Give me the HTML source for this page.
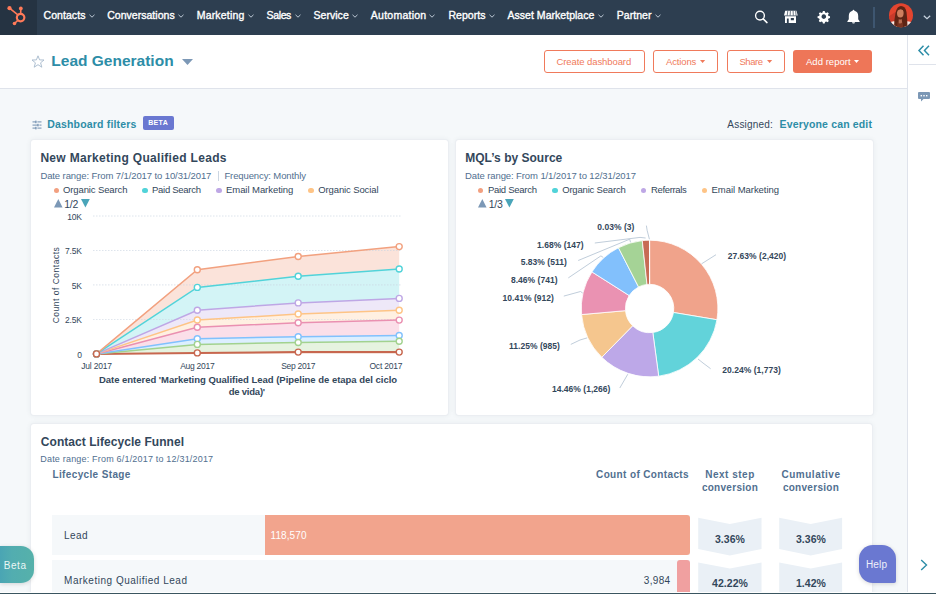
<!DOCTYPE html><html><head><meta charset="utf-8"><style>
html,body{margin:0;padding:0;}
body{width:936px;height:594px;overflow:hidden;position:relative;background:#f5f8fa;font-family:"Liberation Sans", sans-serif;}
.t{position:absolute;white-space:nowrap;line-height:20px;}
svg{position:absolute;overflow:visible;}
</style></head><body>
<div style="position:absolute;left:0px;top:0px;width:936px;height:34.5px;background:#2d3e50"></div>
<div style="position:absolute;left:0px;top:0px;width:37px;height:34.5px;background:#253342"></div>
<svg style="left:0;top:0" width="37" height="35" viewBox="0 0 37 35">
<g fill="none" stroke="#ff7a59" stroke-linecap="round">
<circle cx="20.6" cy="17.6" r="3.75" stroke-width="2.2"/>
<line x1="9.5" y1="8.2" x2="17.6" y2="14.6" stroke-width="1.6"/>
<line x1="20.8" y1="8.4" x2="20.7" y2="13" stroke-width="1.6"/>
<line x1="14.5" y1="23.5" x2="17.8" y2="20.4" stroke-width="1.6"/>
</g>
<g fill="#ff7a59"><circle cx="9.5" cy="8.2" r="2.1"/><circle cx="20.8" cy="8.4" r="1.9"/><circle cx="14.5" cy="23.5" r="1.8"/></g>
</svg>
<div class="t" style="left:43.6px;top:5.30px;font-size:10.5px;font-weight:400;color:#ffffff;letter-spacing:0.05px;-webkit-text-stroke:0.35px #ffffff">Contacts</div>
<svg style="left:88.6px;top:14px" width="6" height="4" viewBox="0 0 6 4"><polyline points="0.5,0.8 3,3.2 5.5,0.8" fill="none" stroke="#cbd6e2" stroke-width="0.9"/></svg>
<div class="t" style="left:107.2px;top:5.30px;font-size:10.5px;font-weight:400;color:#ffffff;letter-spacing:0.03px;-webkit-text-stroke:0.35px #ffffff">Conversations</div>
<svg style="left:177.9px;top:14px" width="6" height="4" viewBox="0 0 6 4"><polyline points="0.5,0.8 3,3.2 5.5,0.8" fill="none" stroke="#cbd6e2" stroke-width="0.9"/></svg>
<div class="t" style="left:196.7px;top:5.30px;font-size:10.5px;font-weight:400;color:#ffffff;letter-spacing:0.2px;-webkit-text-stroke:0.35px #ffffff">Marketing</div>
<svg style="left:248.2px;top:14px" width="6" height="4" viewBox="0 0 6 4"><polyline points="0.5,0.8 3,3.2 5.5,0.8" fill="none" stroke="#cbd6e2" stroke-width="0.9"/></svg>
<div class="t" style="left:266.5px;top:5.30px;font-size:10.5px;font-weight:400;color:#ffffff;letter-spacing:-0.35px;-webkit-text-stroke:0.35px #ffffff">Sales</div>
<svg style="left:295.1px;top:14px" width="6" height="4" viewBox="0 0 6 4"><polyline points="0.5,0.8 3,3.2 5.5,0.8" fill="none" stroke="#cbd6e2" stroke-width="0.9"/></svg>
<div class="t" style="left:313.5px;top:5.30px;font-size:10.5px;font-weight:400;color:#ffffff;letter-spacing:0.04px;-webkit-text-stroke:0.35px #ffffff">Service</div>
<svg style="left:352.25px;top:14px" width="6" height="4" viewBox="0 0 6 4"><polyline points="0.5,0.8 3,3.2 5.5,0.8" fill="none" stroke="#cbd6e2" stroke-width="0.9"/></svg>
<div class="t" style="left:370.8px;top:5.30px;font-size:10.5px;font-weight:400;color:#ffffff;letter-spacing:0.25px;-webkit-text-stroke:0.35px #ffffff">Automation</div>
<svg style="left:429.4px;top:14px" width="6" height="4" viewBox="0 0 6 4"><polyline points="0.5,0.8 3,3.2 5.5,0.8" fill="none" stroke="#cbd6e2" stroke-width="0.9"/></svg>
<div class="t" style="left:448.5px;top:5.30px;font-size:10.5px;font-weight:400;color:#ffffff;letter-spacing:0.03px;-webkit-text-stroke:0.35px #ffffff">Reports</div>
<svg style="left:489px;top:14px" width="6" height="4" viewBox="0 0 6 4"><polyline points="0.5,0.8 3,3.2 5.5,0.8" fill="none" stroke="#cbd6e2" stroke-width="0.9"/></svg>
<div class="t" style="left:507.5px;top:5.30px;font-size:10.5px;font-weight:400;color:#ffffff;letter-spacing:0.03px;-webkit-text-stroke:0.35px #ffffff">Asset Marketplace</div>
<svg style="left:597.75px;top:14px" width="6" height="4" viewBox="0 0 6 4"><polyline points="0.5,0.8 3,3.2 5.5,0.8" fill="none" stroke="#cbd6e2" stroke-width="0.9"/></svg>
<div class="t" style="left:616.75px;top:5.30px;font-size:10.5px;font-weight:400;color:#ffffff;letter-spacing:0.05px;-webkit-text-stroke:0.35px #ffffff">Partner</div>
<svg style="left:655.4px;top:14px" width="6" height="4" viewBox="0 0 6 4"><polyline points="0.5,0.8 3,3.2 5.5,0.8" fill="none" stroke="#cbd6e2" stroke-width="0.9"/></svg>
<svg style="left:0;top:0" width="936" height="34" viewBox="0 0 936 34">
<g fill="none" stroke="#ffffff" stroke-width="1.35">
<circle cx="760" cy="15.6" r="4.4"/><line x1="763.2" y1="18.9" x2="767" y2="22.6" stroke-linecap="round" stroke-width="1.5"/>
</g>
<g fill="#ffffff">
<path d="M785.2 10.8 h11.3 l1.2 4.8 h-13.7 z"/>
<path d="M785 16.3 h11 v6.8 h-11 z M786.9 18.4 v4.7 h1.8 v-4.7 z M790.8 18 v2.2 h3.1 v-2.2 z" fill-rule="evenodd"/>
</g>
<g stroke="#2d3e50" stroke-width="0.7">
<line x1="787.8" y1="10.8" x2="787.2" y2="15.6"/><line x1="790.4" y1="10.8" x2="790.1" y2="15.6"/>
<line x1="793.1" y1="10.8" x2="793.3" y2="15.6"/><line x1="795.6" y1="10.8" x2="796.1" y2="15.6"/>
</g>
<g fill="#ffffff" transform="translate(823.8,16.6)">
<path d="M-0.9 -5.6 h1.8 l0.35 1.55 l1.15 0.5 l1.35 -0.85 l1.27 1.27 l-0.85 1.35 l0.5 1.15 l1.55 0.35 v1.8 l-1.55 0.35 l-0.5 1.15 l0.85 1.35 l-1.27 1.27 l-1.35 -0.85 l-1.15 0.5 l-0.35 1.55 h-1.8 l-0.35 -1.55 l-1.15 -0.5 l-1.35 0.85 l-1.27 -1.27 l0.85 -1.35 l-0.5 -1.15 l-1.55 -0.35 v-1.8 l1.55 -0.35 l0.5 -1.15 l-0.85 -1.35 l1.27 -1.27 l1.35 0.85 l1.15 -0.5 z M0 -2.3 a2.3 2.3 0 1 0 0.01 0 z" fill-rule="evenodd"/>
</g>
<g fill="#ffffff">
<path d="M853.5 9.8 q0.9 0 0.9 0.9 q3.8 1 3.8 5.2 v3.4 l1.4 1.9 v0.8 h-12.2 v-0.8 l1.4 -1.9 v-3.4 q0 -4.2 3.8 -5.2 q0 -0.9 0.9 -0.9 z"/>
<path d="M852 22.2 h3 q0 1.4 -1.5 1.4 q-1.5 0 -1.5 -1.4 z"/>
</g>
<line x1="874" y1="7" x2="874" y2="28" stroke="#516f90" stroke-width="1"/>
</svg>
<svg style="left:888px;top:2.5px" width="26" height="26" viewBox="0 0 26 26">
<defs><clipPath id="av"><circle cx="13" cy="12.3" r="12"/></clipPath></defs>
<g clip-path="url(#av)">
<rect x="0" y="0" width="26" height="26" fill="#e3452f"/>
<path d="M0 14 L9 8 L9 26 L0 26 z" fill="#c93a2a"/>
<path d="M1 20 q4 -3 8 -1 l1 8 h-9 z" fill="#f4ede8"/>
<path d="M16 19 q4 -2 9 1 v6 h-9 z" fill="#f0e8e4"/>
<path d="M6 27 q0 -10 1.5 -17 q1.5 -7 5.5 -7 q4.5 0 5.5 6 q1 7 1 18 z" fill="#5e2414"/>
<ellipse cx="12.3" cy="10" rx="3.3" ry="4.5" fill="#cf7f5e"/>
<path d="M10.8 16 q1.5 1 3 0 l0.8 11 h-4.6 z" fill="#b86d52"/>
<path d="M9.5 19 q2.5 3 5 0 l0.5 8 h-6 z" fill="#7a3320"/>
<path d="M9 9 q0.5 -5 3.6 -5 q3.3 0 3.9 5 q-1.2 -2.8 -3.9 -2.8 q-2.6 0 -3.6 2.8 z" fill="#5e2414"/>
</g></svg>
<svg style="left:923px;top:15px" width="8" height="5" viewBox="0 0 8 5"><polyline points="0.8,0.8 4,3.8 7.2,0.8" fill="none" stroke="#cbd6e2" stroke-width="1.2"/></svg>
<div style="position:absolute;left:0px;top:34.5px;width:907.5px;height:53.5px;background:#ffffff;border-bottom:1px solid #dfe3eb"></div>
<svg style="left:31px;top:55px" width="14" height="13" viewBox="0 0 14 13"><polygon points="7,0.8 8.6,4.9 13,5.0 9.6,7.8 10.8,12.2 7,9.7 3.2,12.2 4.4,7.8 1,5.0 5.4,4.9" fill="none" stroke="#a6b9cc" stroke-width="0.9" stroke-linejoin="round"/></svg>
<div class="t" style="left:51.3px;top:51.00px;font-size:15.5px;font-weight:700;color:#2d8da7;letter-spacing:0px;">Lead Generation</div>
<svg style="left:182px;top:59px" width="11" height="6" viewBox="0 0 11 6"><polygon points="0,0 11,0 5.5,6" fill="#7c98b6"/></svg>
<div style="position:absolute;left:543.7px;top:49.8px;width:100.89999999999998px;height:23.7px;border:1px solid #f07a5b;background:#fff;border-radius:3px;box-sizing:border-box"></div>
<div class="t" style="left:556.5px;top:51.60px;font-size:9.5px;font-weight:400;color:#f07a5b;letter-spacing:-0.09px;">Create dashboard</div>
<div style="position:absolute;left:653.2px;top:49.8px;width:64.59999999999991px;height:23.7px;border:1px solid #f07a5b;background:#fff;border-radius:3px;box-sizing:border-box"></div>
<div class="t" style="left:666px;top:51.60px;font-size:9.5px;font-weight:400;color:#f07a5b;letter-spacing:-0.14px;">Actions</div>
<svg style="left:699.6px;top:60px" width="5.2" height="3" viewBox="0 0 5.2 3"><polygon points="0,0 5.2,0 2.6,3" fill="#f07a5b"/></svg>
<div style="position:absolute;left:726.5px;top:49.8px;width:58.200000000000045px;height:23.7px;border:1px solid #f07a5b;background:#fff;border-radius:3px;box-sizing:border-box"></div>
<div class="t" style="left:739.4px;top:51.60px;font-size:9.5px;font-weight:400;color:#f07a5b;letter-spacing:-0.44px;">Share</div>
<svg style="left:766.5px;top:60px" width="5.2" height="3" viewBox="0 0 5.2 3"><polygon points="0,0 5.2,0 2.6,3" fill="#f07a5b"/></svg>
<div style="position:absolute;left:793.2px;top:49.8px;width:79.0px;height:23.7px;background:#ee7658;border-radius:3px;box-sizing:border-box"></div>
<div class="t" style="left:806px;top:51.60px;font-size:9.5px;font-weight:400;color:#ffffff;letter-spacing:0.03px;">Add report</div>
<svg style="left:854.2px;top:60px" width="5" height="3" viewBox="0 0 5 3"><polygon points="0,0 5,0 2.5,3" fill="#ffffff"/></svg>
<div style="position:absolute;left:907.3px;top:34.5px;width:28.7px;height:560px;background:#ffffff;border-left:1.5px solid #dfe3eb;box-sizing:border-box"></div>
<div style="position:absolute;left:909px;top:64px;width:27px;height:1px;background:#dfe3eb"></div>
<svg style="left:918px;top:45px" width="12" height="11" viewBox="0 0 12 11"><g fill="none" stroke="#2d8da7" stroke-width="1.5"><polyline points="5.5,0.8 1,5.5 5.5,10.2"/><polyline points="11,0.8 6.5,5.5 11,10.2"/></g></svg>
<svg style="left:918px;top:92px" width="12" height="10" viewBox="0 0 12 10"><path d="M1 0 h10 q1 0 1 1 v5 q0 1 -1 1 h-5.5 l-2.5 2.6 v-2.6 h-2 q-1 0 -1 -1 v-5 q0 -1 1 -1 z" fill="#7c98b6"/><g fill="#fff"><rect x="2.6" y="3" width="1.4" height="1.4"/><rect x="5.3" y="3" width="1.4" height="1.4"/><rect x="8" y="3" width="1.4" height="1.4"/></g></svg>
<svg style="left:920px;top:559px" width="8" height="12" viewBox="0 0 8 12"><polyline points="1.2,1 6.5,6 1.2,11" fill="none" stroke="#2d8da7" stroke-width="1.4"/></svg>
<svg style="left:31.5px;top:119.5px" width="10" height="10" viewBox="0 0 10 10"><g stroke="#7c98b6" stroke-width="1.1"><line x1="0.5" y1="1.9" x2="4.4" y2="1.9"/><line x1="5.4" y1="1.9" x2="9.5" y2="1.9"/><line x1="0.5" y1="5.1" x2="6.5" y2="5.1"/><line x1="7.4" y1="5.1" x2="9.5" y2="5.1"/><line x1="0.5" y1="8.1" x2="4.4" y2="8.1"/><line x1="5.4" y1="8.1" x2="9.5" y2="8.1"/></g><g fill="#7c98b6"><rect x="3.2" y="0.6" width="1.3" height="2.6"/><rect x="5.3" y="3.8" width="1.3" height="2.6"/><rect x="3.2" y="6.8" width="1.3" height="2.6"/></g></svg>
<div class="t" style="left:47.2px;top:114.30px;font-size:10.5px;font-weight:700;color:#2d8da7;letter-spacing:0.18px;">Dashboard filters</div>
<div style="position:absolute;left:142.6px;top:115.6px;width:31.1px;height:14.4px;background:#6a78d1;border-radius:2px"></div>
<div class="t" style="left:8.150000000000006px;width:300px;text-align:center;top:113.00px;font-size:7px;font-weight:700;color:#ffffff;letter-spacing:0.3px;">BETA</div>
<div class="t" style="left:727.3px;top:114.50px;font-size:10px;font-weight:400;color:#33475b;letter-spacing:0.21px;">Assigned:</div>
<div class="t" style="left:779.5px;top:114.30px;font-size:10.5px;font-weight:700;color:#2d8da7;letter-spacing:0.16px;">Everyone can edit</div>
<div style="position:absolute;left:31px;top:140px;width:417px;height:275.3px;background:#ffffff;border-radius:3px;box-shadow:0 0 0 1px #ebeef2, 0 0 5px 1px rgba(45,62,80,0.06)"></div>
<div style="position:absolute;left:456px;top:140px;width:417px;height:275.3px;background:#ffffff;border-radius:3px;box-shadow:0 0 0 1px #ebeef2, 0 0 5px 1px rgba(45,62,80,0.06)"></div>
<div style="position:absolute;left:31px;top:424px;width:841px;height:200px;background:#ffffff;border-radius:3px;box-shadow:0 0 0 1px #ebeef2, 0 0 5px 1px rgba(45,62,80,0.06)"></div>
<div class="t" style="left:40.4px;top:147.90px;font-size:12px;font-weight:700;color:#33475b;letter-spacing:0.31px;">New Marketing Qualified Leads</div>
<div class="t" style="left:40.4px;top:165.60px;font-size:9.5px;font-weight:400;color:#516f90;letter-spacing:-0.1px;">Date range: From 7/1/2017 to 10/31/2017</div>
<div style="position:absolute;left:218px;top:170.5px;width:0.8px;height:10.5px;background:#cbd6e2"></div>
<div class="t" style="left:224.4px;top:165.60px;font-size:9.5px;font-weight:400;color:#516f90;letter-spacing:-0.11px;">Frequency: Monthly</div>
<div style="position:absolute;left:53.6px;top:187.5px;width:5.6px;height:5.6px;border-radius:50%;background:#f2a080"></div>
<div class="t" style="left:63px;top:180.10px;font-size:9.5px;font-weight:400;color:#33475b;letter-spacing:-0.12px;">Organic Search</div>
<div style="position:absolute;left:142.0px;top:187.5px;width:5.6px;height:5.6px;border-radius:50%;background:#51d3d9"></div>
<div class="t" style="left:152px;top:180.10px;font-size:9.5px;font-weight:400;color:#33475b;letter-spacing:-0.28px;">Paid Search</div>
<div style="position:absolute;left:216.2px;top:187.5px;width:5.6px;height:5.6px;border-radius:50%;background:#bea7e5"></div>
<div class="t" style="left:226px;top:180.10px;font-size:9.5px;font-weight:400;color:#33475b;letter-spacing:-0.06px;">Email Marketing</div>
<div style="position:absolute;left:308.2px;top:187.5px;width:5.6px;height:5.6px;border-radius:50%;background:#fec486"></div>
<div class="t" style="left:318.3px;top:180.10px;font-size:9.5px;font-weight:400;color:#33475b;letter-spacing:-0.12px;">Organic Social</div>
<svg style="left:53.7px;top:199.39999999999998px" width="9" height="9" viewBox="0 0 9 9"><polygon points="4.3,0 8.6,8.6 0,8.6" fill="#7c98b6"/></svg>
<div class="t" style="left:64.2px;top:194.00px;font-size:10.5px;font-weight:400;color:#33475b;letter-spacing:-0.2px;">1/2</div>
<svg style="left:80.7px;top:199.39999999999998px" width="9" height="9" viewBox="0 0 9 9"><polygon points="0,0 8.8,0 4.4,8.6" fill="#4aa5b9"/></svg>
<div class="t" style="left:-218.3px;width:300px;text-align:right;top:206.70px;font-size:8.5px;font-weight:400;color:#33475b;letter-spacing:-0.2px;">10K</div>
<div class="t" style="left:-218.3px;width:300px;text-align:right;top:241.17px;font-size:8.5px;font-weight:400;color:#33475b;letter-spacing:-0.2px;">7.5K</div>
<div class="t" style="left:-218.3px;width:300px;text-align:right;top:275.65px;font-size:8.5px;font-weight:400;color:#33475b;letter-spacing:-0.2px;">5K</div>
<div class="t" style="left:-218.3px;width:300px;text-align:right;top:310.12px;font-size:8.5px;font-weight:400;color:#33475b;letter-spacing:-0.2px;">2.5K</div>
<div class="t" style="left:-218.3px;width:300px;text-align:right;top:344.60px;font-size:8.5px;font-weight:400;color:#33475b;letter-spacing:-0.2px;">0</div>
<svg style="left:0;top:0" width="936" height="594" viewBox="0 0 936 594"><polygon points="96.5,353.9 197.3,269.7 298.2,256.5 399.2,246.6 399.2,269.0 298.2,276.3 197.3,287.4 96.5,353.9" fill="#fbe3da"/><polygon points="96.5,353.9 197.3,287.4 298.2,276.3 399.2,269.0 399.2,298.4 298.2,302.9 197.3,310.2 96.5,353.9" fill="#d3f4f6"/><polygon points="96.5,353.9 197.3,310.2 298.2,302.9 399.2,298.4 399.2,310.2 298.2,314.0 197.3,320.0 96.5,353.9" fill="#eee8f8"/><polygon points="96.5,353.9 197.3,320.0 298.2,314.0 399.2,310.2 399.2,320.1 298.2,322.7 197.3,327.2 96.5,353.9" fill="#fff0e2"/><polygon points="96.5,353.9 197.3,327.2 298.2,322.7 399.2,320.1 399.2,335.5 298.2,336.7 197.3,338.7 96.5,353.9" fill="#fbdfe9"/><polygon points="96.5,353.9 197.3,338.7 298.2,336.7 399.2,335.5 399.2,341.2 298.2,342.5 197.3,344.4 96.5,353.9" fill="#dcefff"/><polygon points="96.5,353.9 197.3,344.4 298.2,342.5 399.2,341.2 399.2,352.1 298.2,352.1 197.3,352.9 96.5,353.9" fill="#e6f3e0"/><polygon points="96.5,353.9 197.3,352.9 298.2,352.1 399.2,352.1 399.2,353.9 298.2,353.9 197.3,353.9 96.5,353.9" fill="#f6e3dd"/><line x1="93" y1="216.0" x2="402" y2="216.0" stroke="#cbd6e2" stroke-width="0.8" stroke-dasharray="1.5,1.5" opacity="0.8"/><line x1="93" y1="250.5" x2="402" y2="250.5" stroke="#cbd6e2" stroke-width="0.8" stroke-dasharray="1.5,1.5" opacity="0.8"/><line x1="93" y1="284.9" x2="402" y2="284.9" stroke="#cbd6e2" stroke-width="0.8" stroke-dasharray="1.5,1.5" opacity="0.8"/><line x1="93" y1="319.4" x2="402" y2="319.4" stroke="#cbd6e2" stroke-width="0.8" stroke-dasharray="1.5,1.5" opacity="0.8"/><polyline points="96.5,353.9 197.3,352.9 298.2,352.1 399.2,352.1" fill="none" stroke="#c7674f" stroke-width="2"/><polyline points="96.5,353.9 197.3,344.4 298.2,342.5 399.2,341.2" fill="none" stroke="#a2d28f" stroke-width="1.5"/><polyline points="96.5,353.9 197.3,338.7 298.2,336.7 399.2,335.5" fill="none" stroke="#81c1fd" stroke-width="1.5"/><polyline points="96.5,353.9 197.3,327.2 298.2,322.7 399.2,320.1" fill="none" stroke="#ea90b1" stroke-width="1.5"/><polyline points="96.5,353.9 197.3,320.0 298.2,314.0 399.2,310.2" fill="none" stroke="#fec486" stroke-width="1.5"/><polyline points="96.5,353.9 197.3,310.2 298.2,302.9 399.2,298.4" fill="none" stroke="#bea7e5" stroke-width="1.5"/><polyline points="96.5,353.9 197.3,287.4 298.2,276.3 399.2,269.0" fill="none" stroke="#51d3d9" stroke-width="1.5"/><polyline points="96.5,353.9 197.3,269.7 298.2,256.5 399.2,246.6" fill="none" stroke="#f2a17f" stroke-width="1.5"/><circle cx="96.5" cy="353.9" r="3" fill="#fff" stroke="#f2a17f" stroke-width="1.4"/><circle cx="197.3" cy="269.7" r="3" fill="#fff" stroke="#f2a17f" stroke-width="1.4"/><circle cx="298.2" cy="256.5" r="3" fill="#fff" stroke="#f2a17f" stroke-width="1.4"/><circle cx="399.2" cy="246.6" r="3" fill="#fff" stroke="#f2a17f" stroke-width="1.4"/><circle cx="96.5" cy="353.9" r="3" fill="#fff" stroke="#51d3d9" stroke-width="1.4"/><circle cx="197.3" cy="287.4" r="3" fill="#fff" stroke="#51d3d9" stroke-width="1.4"/><circle cx="298.2" cy="276.3" r="3" fill="#fff" stroke="#51d3d9" stroke-width="1.4"/><circle cx="399.2" cy="269.0" r="3" fill="#fff" stroke="#51d3d9" stroke-width="1.4"/><circle cx="96.5" cy="353.9" r="3" fill="#fff" stroke="#bea7e5" stroke-width="1.4"/><circle cx="197.3" cy="310.2" r="3" fill="#fff" stroke="#bea7e5" stroke-width="1.4"/><circle cx="298.2" cy="302.9" r="3" fill="#fff" stroke="#bea7e5" stroke-width="1.4"/><circle cx="399.2" cy="298.4" r="3" fill="#fff" stroke="#bea7e5" stroke-width="1.4"/><circle cx="96.5" cy="353.9" r="3" fill="#fff" stroke="#fec486" stroke-width="1.4"/><circle cx="197.3" cy="320.0" r="3" fill="#fff" stroke="#fec486" stroke-width="1.4"/><circle cx="298.2" cy="314.0" r="3" fill="#fff" stroke="#fec486" stroke-width="1.4"/><circle cx="399.2" cy="310.2" r="3" fill="#fff" stroke="#fec486" stroke-width="1.4"/><circle cx="96.5" cy="353.9" r="3" fill="#fff" stroke="#ea90b1" stroke-width="1.4"/><circle cx="197.3" cy="327.2" r="3" fill="#fff" stroke="#ea90b1" stroke-width="1.4"/><circle cx="298.2" cy="322.7" r="3" fill="#fff" stroke="#ea90b1" stroke-width="1.4"/><circle cx="399.2" cy="320.1" r="3" fill="#fff" stroke="#ea90b1" stroke-width="1.4"/><circle cx="96.5" cy="353.9" r="3" fill="#fff" stroke="#81c1fd" stroke-width="1.4"/><circle cx="197.3" cy="338.7" r="3" fill="#fff" stroke="#81c1fd" stroke-width="1.4"/><circle cx="298.2" cy="336.7" r="3" fill="#fff" stroke="#81c1fd" stroke-width="1.4"/><circle cx="399.2" cy="335.5" r="3" fill="#fff" stroke="#81c1fd" stroke-width="1.4"/><circle cx="96.5" cy="353.9" r="3" fill="#fff" stroke="#a2d28f" stroke-width="1.4"/><circle cx="197.3" cy="344.4" r="3" fill="#fff" stroke="#a2d28f" stroke-width="1.4"/><circle cx="298.2" cy="342.5" r="3" fill="#fff" stroke="#a2d28f" stroke-width="1.4"/><circle cx="399.2" cy="341.2" r="3" fill="#fff" stroke="#a2d28f" stroke-width="1.4"/><circle cx="96.5" cy="353.9" r="3" fill="#fff" stroke="#c7674f" stroke-width="1.4"/><circle cx="197.3" cy="352.9" r="3" fill="#fff" stroke="#c7674f" stroke-width="1.4"/><circle cx="298.2" cy="352.1" r="3" fill="#fff" stroke="#c7674f" stroke-width="1.4"/><circle cx="399.2" cy="352.1" r="3" fill="#fff" stroke="#c7674f" stroke-width="1.4"/></svg>
<div class="t" style="left:-53.5px;width:300px;text-align:center;top:355.60px;font-size:8.5px;font-weight:400;color:#33475b;letter-spacing:-0.22px;">Jul 2017</div>
<div class="t" style="left:47.30000000000001px;width:300px;text-align:center;top:355.60px;font-size:8.5px;font-weight:400;color:#33475b;letter-spacing:-0.27px;">Aug 2017</div>
<div class="t" style="left:148.2px;width:300px;text-align:center;top:355.60px;font-size:8.5px;font-weight:400;color:#33475b;letter-spacing:-0.32px;">Sep 2017</div>
<div class="t" style="left:235.89999999999998px;width:300px;text-align:center;top:355.60px;font-size:8.5px;font-weight:400;color:#33475b;letter-spacing:-0.21px;">Oct 2017</div>
<div class="t" style="left:98px;width:300px;text-align:center;top:370.00px;font-size:9.5px;font-weight:700;color:#33475b;letter-spacing:-0.02px;">Date entered 'Marketing Qualified Lead (Pipeline de etapa del ciclo</div>
<div class="t" style="left:96.80000000000001px;width:300px;text-align:center;top:381.60px;font-size:9.5px;font-weight:700;color:#33475b;letter-spacing:-0.22px;">de vida)'</div>
<div class="t" style="left:-94.2px;width:300px;text-align:center;top:275px;font-size:8.5px;color:#33475b;letter-spacing:0.5px;transform:rotate(-90deg)">Count of Contacts</div>
<div class="t" style="left:465.2px;top:148.10px;font-size:12px;font-weight:700;color:#33475b;letter-spacing:0.01px;">MQL’s by Source</div>
<div class="t" style="left:465px;top:165.60px;font-size:9.5px;font-weight:400;color:#516f90;letter-spacing:-0.1px;">Date range: From 1/1/2017 to 12/31/2017</div>
<div style="position:absolute;left:477.9px;top:187.5px;width:5.6px;height:5.6px;border-radius:50%;background:#f2a080"></div>
<div class="t" style="left:487.9px;top:180.10px;font-size:9.5px;font-weight:400;color:#33475b;letter-spacing:-0.26px;">Paid Search</div>
<div style="position:absolute;left:552.2px;top:187.5px;width:5.6px;height:5.6px;border-radius:50%;background:#51d3d9"></div>
<div class="t" style="left:562.2px;top:180.10px;font-size:9.5px;font-weight:400;color:#33475b;letter-spacing:-0.19px;">Organic Search</div>
<div style="position:absolute;left:640.8000000000001px;top:187.5px;width:5.6px;height:5.6px;border-radius:50%;background:#bea7e5"></div>
<div class="t" style="left:650.9px;top:180.10px;font-size:9.5px;font-weight:400;color:#33475b;letter-spacing:-0.32px;">Referrals</div>
<div style="position:absolute;left:701.8000000000001px;top:187.5px;width:5.6px;height:5.6px;border-radius:50%;background:#fec486"></div>
<div class="t" style="left:711.5px;top:180.10px;font-size:9.5px;font-weight:400;color:#33475b;letter-spacing:-0.04px;">Email Marketing</div>
<svg style="left:478px;top:199.29999999999998px" width="9" height="9" viewBox="0 0 9 9"><polygon points="4.3,0 8.6,8.6 0,8.6" fill="#7c98b6"/></svg>
<div class="t" style="left:488.7px;top:193.90px;font-size:10.5px;font-weight:400;color:#33475b;letter-spacing:-0.2px;">1/3</div>
<svg style="left:505.3px;top:199.29999999999998px" width="9" height="9" viewBox="0 0 9 9"><polygon points="0,0 8.8,0 4.4,8.6" fill="#4aa5b9"/></svg>
<svg style="left:0;top:0" width="936" height="594" viewBox="0 0 936 594"><path d="M649.60,240.20 A68.3,68.3 0 0 1 716.97,319.75 L673.47,312.48 A24.2,24.2 0 0 0 649.60,284.30 Z" fill="#f0a38b" stroke="#fff" stroke-width="0.8"/><path d="M716.97,319.75 A68.3,68.3 0 0 1 658.69,376.19 L652.82,332.48 A24.2,24.2 0 0 0 673.47,312.48 Z" fill="#62d3da" stroke="#fff" stroke-width="0.8"/><path d="M658.69,376.19 A68.3,68.3 0 0 1 601.80,357.29 L632.66,325.79 A24.2,24.2 0 0 0 652.82,332.48 Z" fill="#bda8e8" stroke="#fff" stroke-width="0.8"/><path d="M601.80,357.29 A68.3,68.3 0 0 1 581.57,314.55 L625.50,310.65 A24.2,24.2 0 0 0 632.66,325.79 Z" fill="#f5c68e" stroke="#fff" stroke-width="0.8"/><path d="M581.57,314.55 A68.3,68.3 0 0 1 591.93,271.91 L629.17,295.54 A24.2,24.2 0 0 0 625.50,310.65 Z" fill="#ea92b2" stroke="#fff" stroke-width="0.8"/><path d="M591.93,271.91 A68.3,68.3 0 0 1 618.44,247.72 L638.56,286.97 A24.2,24.2 0 0 0 629.17,295.54 Z" fill="#82c0fc" stroke="#fff" stroke-width="0.8"/><path d="M618.44,247.72 A68.3,68.3 0 0 1 642.28,240.59 L647.00,284.44 A24.2,24.2 0 0 0 638.56,286.97 Z" fill="#a5d396" stroke="#fff" stroke-width="0.8"/><path d="M642.28,240.59 A68.3,68.3 0 0 1 649.47,240.20 L649.55,284.30 A24.2,24.2 0 0 0 647.00,284.44 Z" fill="#c76b55" stroke="#fff" stroke-width="0.8"/><path d="M649.47,240.20 A68.3,68.3 0 0 1 649.60,240.20 L649.60,284.30 A24.2,24.2 0 0 0 649.55,284.30 Z" fill="#c76b55" stroke="#fff" stroke-width="0.8"/><polyline points="701.6,263.8 716,254.7" fill="none" stroke="#b9c7d6" stroke-width="0.9"/><polyline points="698,359 703,363 710.6,368.7" fill="none" stroke="#b9c7d6" stroke-width="0.9"/><polyline points="627.8,374.2 619.8,388" fill="none" stroke="#b9c7d6" stroke-width="0.9"/><polyline points="587.1,337.9 580,340 570.8,344.4" fill="none" stroke="#b9c7d6" stroke-width="0.9"/><polyline points="582.7,293 580.5,291.5 563.8,296.1" fill="none" stroke="#b9c7d6" stroke-width="0.9"/><polyline points="603.2,257.4 600.9,255.9 568.3,277.9" fill="none" stroke="#b9c7d6" stroke-width="0.9"/><polyline points="630.5,242.3 629.7,239.2 578.2,260.5" fill="none" stroke="#b9c7d6" stroke-width="0.9"/><polyline points="645.6,238 640,237.4 594.8,243" fill="none" stroke="#b9c7d6" stroke-width="0.9"/><polyline points="649.4,239.2 647.1,230.2 646.4,225.6" fill="none" stroke="#b9c7d6" stroke-width="0.9"/></svg>
<div class="t" style="left:727.7px;top:246.10px;font-size:8.5px;font-weight:700;color:#33475b;letter-spacing:0.03px;">27.63% (2,420)</div>
<div class="t" style="left:722.3px;top:359.80px;font-size:8.5px;font-weight:700;color:#33475b;letter-spacing:0.03px;">20.24% (1,773)</div>
<div class="t" style="left:551.9px;top:379.00px;font-size:8.5px;font-weight:700;color:#33475b;letter-spacing:0.03px;">14.46% (1,266)</div>
<div class="t" style="left:509px;top:335.90px;font-size:8.5px;font-weight:700;color:#33475b;letter-spacing:0.03px;">11.25% (985)</div>
<div class="t" style="left:502.5px;top:287.50px;font-size:8.5px;font-weight:700;color:#33475b;letter-spacing:0.03px;">10.41% (912)</div>
<div class="t" style="left:510.9px;top:269.70px;font-size:8.5px;font-weight:700;color:#33475b;letter-spacing:0.03px;">8.46% (741)</div>
<div class="t" style="left:520.7px;top:252.30px;font-size:8.5px;font-weight:700;color:#33475b;letter-spacing:0.03px;">5.83% (511)</div>
<div class="t" style="left:537px;top:234.50px;font-size:8.5px;font-weight:700;color:#33475b;letter-spacing:0.03px;">1.68% (147)</div>
<div class="t" style="left:597.3px;top:216.70px;font-size:8.5px;font-weight:700;color:#33475b;letter-spacing:0.03px;">0.03% (3)</div>
<div class="t" style="left:40.8px;top:432.20px;font-size:12px;font-weight:700;color:#33475b;letter-spacing:0.05px;">Contact Lifecycle Funnel</div>
<div class="t" style="left:40.3px;top:448.70px;font-size:9px;font-weight:400;color:#516f90;letter-spacing:0.19px;">Date range: From 6/1/2017 to 12/31/2017</div>
<div class="t" style="left:52.5px;top:464.50px;font-size:10px;font-weight:700;color:#516f90;letter-spacing:0.36px;">Lifecycle Stage</div>
<div class="t" style="left:389px;width:300px;text-align:right;top:465.00px;font-size:10px;font-weight:700;color:#516f90;letter-spacing:0.37px;">Count of Contacts</div>
<div class="t" style="left:580px;width:300px;text-align:center;top:465.00px;font-size:10px;font-weight:700;color:#516f90;letter-spacing:0.5px;">Next step</div>
<div class="t" style="left:580px;width:300px;text-align:center;top:478.00px;font-size:10px;font-weight:700;color:#516f90;letter-spacing:0.29px;">conversion</div>
<div class="t" style="left:661px;width:300px;text-align:center;top:465.00px;font-size:10px;font-weight:700;color:#516f90;letter-spacing:0.51px;">Cumulative</div>
<div class="t" style="left:661px;width:300px;text-align:center;top:478.00px;font-size:10px;font-weight:700;color:#516f90;letter-spacing:0.29px;">conversion</div>
<div style="position:absolute;left:51.7px;top:515px;width:638px;height:40px;background:#f5f8fa"></div>
<div style="position:absolute;left:264.5px;top:515px;width:425px;height:40px;background:#f2a48d;border-radius:0 3px 3px 0"></div>
<div class="t" style="left:64.1px;top:526.30px;font-size:10px;font-weight:400;color:#33475b;letter-spacing:0.42px;">Lead</div>
<div class="t" style="left:270.5px;top:526.00px;font-size:10px;font-weight:400;color:#ffffff;letter-spacing:0.1px;">118,570</div>
<div style="position:absolute;left:51.7px;top:559.8px;width:638px;height:40px;background:#f5f8fa"></div>
<div style="position:absolute;left:677px;top:559.8px;width:12.5px;height:40px;background:#f0a0a0;border-radius:3px 3px 0 0"></div>
<div class="t" style="left:64.1px;top:571.20px;font-size:10px;font-weight:400;color:#33475b;letter-spacing:0.51px;">Marketing Qualified Lead</div>
<div class="t" style="left:370.5px;width:300px;text-align:right;top:570.50px;font-size:10px;font-weight:400;color:#33475b;letter-spacing:0.35px;">3,984</div>
<svg style="left:0;top:0" width="936" height="594" viewBox="0 0 936 594"><polygon points="698.2,517.8 729.85,524.0999999999999 761.5,517.8 761.5,549.0999999999999 729.85,555.3999999999999 698.2,549.0999999999999" fill="#eaf0f6"/><polygon points="698.2,562.6 729.85,568.6 761.5,562.6 761.5,593.9 729.85,599.9 698.2,593.9" fill="#eaf0f6"/><polygon points="779.2,517.8 810.6500000000001,524.0999999999999 842.1,517.8 842.1,549.0999999999999 810.6500000000001,555.3999999999999 779.2,549.0999999999999" fill="#eaf0f6"/><polygon points="779.2,562.6 810.6500000000001,568.6 842.1,562.6 842.1,593.9 810.6500000000001,599.9 779.2,593.9" fill="#eaf0f6"/></svg>
<div class="t" style="left:580px;width:300px;text-align:center;top:528.50px;font-size:10.5px;font-weight:700;color:#33475b;letter-spacing:0.05px;">3.36%</div>
<div class="t" style="left:661px;width:300px;text-align:center;top:528.50px;font-size:10.5px;font-weight:700;color:#33475b;letter-spacing:0.05px;">3.36%</div>
<div class="t" style="left:580px;width:300px;text-align:center;top:573.00px;font-size:10.5px;font-weight:700;color:#33475b;letter-spacing:0.05px;">42.22%</div>
<div class="t" style="left:661px;width:300px;text-align:center;top:573.00px;font-size:10.5px;font-weight:700;color:#33475b;letter-spacing:0.05px;">1.42%</div>
<div style="position:absolute;left:0px;top:546px;width:33.5px;height:36.7px;background:linear-gradient(90deg,#4aa5b4 0%,#52adb0 35%,#56b1aa 100%);border-radius:0 13px 13px 0;box-shadow:0 1px 4px rgba(0,0,0,0.15)"></div>
<div class="t" style="left:3.8px;top:555.80px;font-size:10px;font-weight:400;color:#eaf6f5;letter-spacing:0.54px;">Beta</div>
<div style="position:absolute;left:859px;top:545.3px;width:37px;height:37.5px;background:#6a78d1;border-radius:14px 14px 2px 14px;box-shadow:0 1px 4px rgba(0,0,0,0.15)"></div>
<div class="t" style="left:866px;top:555.30px;font-size:10px;font-weight:400;color:#eef0fa;letter-spacing:0.14px;">Help</div>
<div style="position:absolute;left:0px;top:592px;width:936px;height:1px;background:#ffffff"></div>
<div style="position:absolute;left:0px;top:593px;width:936px;height:1px;background:#3a5560"></div>
</body></html>
